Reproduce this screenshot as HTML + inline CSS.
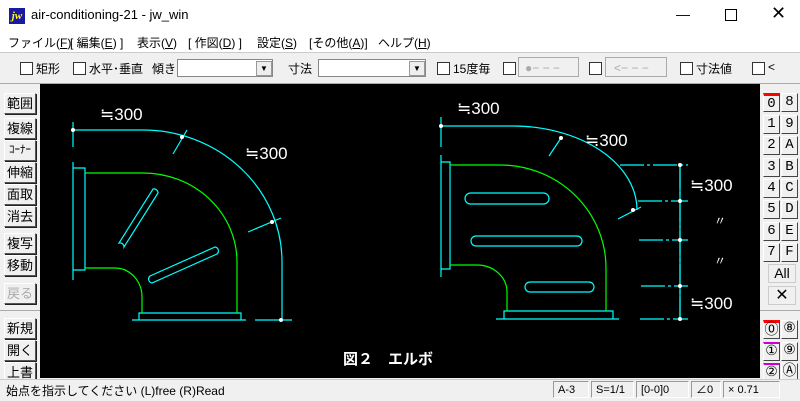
<!DOCTYPE html><html><head><meta charset="utf-8"><style>
body{margin:0;width:800px;height:400px;overflow:hidden;background:#f0f0f0;font-family:"Liberation Sans","Noto Sans CJK JP",sans-serif;position:relative}
.a{position:absolute;white-space:nowrap}
.t{font-size:12px;color:#000}
.cb{position:absolute;width:11px;height:11px;border:1px solid #333;background:#fff}
.btn{position:absolute;width:30px;height:19px;background:#f0f0f0;border:1px solid;border-color:#fff #555 #555 #fff;box-shadow:1px 1px 0 #222;font-size:13px;text-align:center;line-height:19px}
.rb{position:absolute;width:15px;height:17px;background:#f0f0f0;border:1px solid;border-color:#fff #444 #444 #fff;font-family:"Liberation Mono",monospace;font-size:14px;text-align:center;line-height:17px}
.sb{position:absolute;top:381px;height:17px;border:1px solid;border-color:#999 #fff #fff #999;font-size:11px;line-height:17px;padding-left:4px;box-sizing:border-box}
</style></head><body>
<div class="a" style="left:0;top:0;width:800px;height:32px;background:#fff"></div>
<div class="a" style="left:9px;top:8px;width:16px;height:16px;background:#1a1aa0;color:#ff0;font:bold italic 11px 'Liberation Serif',serif;line-height:16px;text-align:center">jw</div>
<div class="a" style="left:31px;top:7px;font-size:13px">air-conditioning-21 - jw_win</div>
<div class="a" style="left:676px;top:6px;font-size:14px">&#8212;</div>
<div class="a" style="left:725px;top:9px;width:10px;height:10px;border:1px solid #000"></div>
<div class="a" style="left:771px;top:3px;font-size:18px">✕</div>
<div class="a" style="left:0;top:32px;width:800px;height:20px;background:#fff"></div>
<div class="a t" style="left:8px;top:34px">ファイル(<u>F</u>)</div>
<div class="a t" style="left:70px;top:34px">[ 編集(<u>E</u>) ]</div>
<div class="a t" style="left:137px;top:34px">表示(<u>V</u>)</div>
<div class="a t" style="left:188px;top:34px">[ 作図(<u>D</u>) ]</div>
<div class="a t" style="left:257px;top:34px">設定(<u>S</u>)</div>
<div class="a t" style="left:309px;top:34px">[その他(<u>A</u>)]</div>
<div class="a t" style="left:378px;top:34px">ヘルプ(<u>H</u>)</div>
<div class="a" style="left:0;top:52px;width:800px;height:1px;background:#ccc"></div>
<div class="cb" style="left:20px;top:62px"></div><div class="a t" style="left:36px;top:60px">矩形</div>
<div class="cb" style="left:73px;top:62px"></div><div class="a t" style="left:89px;top:60px">水平･垂直</div>
<div class="a t" style="left:152px;top:60px">傾き</div>
<div class="a" style="left:177px;top:59px;width:94px;height:16px;background:#fff;border:1px solid #888"></div>
<div class="a" style="left:256px;top:61px;width:14px;height:13px;border:1px solid #999;background:#eee;font-size:8px;text-align:center;line-height:13px">▼</div>
<div class="a t" style="left:288px;top:60px">寸法</div>
<div class="a" style="left:318px;top:59px;width:106px;height:16px;background:#fff;border:1px solid #888"></div>
<div class="a" style="left:409px;top:61px;width:14px;height:13px;border:1px solid #999;background:#eee;font-size:8px;text-align:center;line-height:13px">▼</div>
<div class="cb" style="left:437px;top:62px"></div><div class="a t" style="left:453px;top:60px">15度毎</div>
<div class="cb" style="left:503px;top:62px"></div>
<div class="a" style="left:518px;top:57px;width:61px;height:20px;border:1px solid #aaa;color:#aaa;font-size:12px;line-height:20px;padding-left:6px;box-sizing:border-box">●− − −</div>
<div class="cb" style="left:589px;top:62px"></div>
<div class="a" style="left:605px;top:57px;width:62px;height:20px;border:1px solid #aaa;color:#aaa;font-size:12px;line-height:20px;padding-left:8px;box-sizing:border-box">&lt;− − −</div>
<div class="cb" style="left:680px;top:62px"></div><div class="a t" style="left:696px;top:60px">寸法値</div>
<div class="cb" style="left:752px;top:62px"></div><div class="a t" style="left:768px;top:60px">&lt;</div>
<div class="a" style="left:0;top:83px;width:800px;height:1px;background:#aaa"></div>
<div class="a" style="left:40px;top:84px;width:720px;height:294px;background:#000"></div>
<div class="btn" style="left:4px;top:93px">範囲</div>
<div class="btn" style="left:4px;top:118px">複線</div>
<div class="btn" style="left:4px;top:140px;font-size:11px">ｺｰﾅｰ</div>
<div class="btn" style="left:4px;top:162px">伸縮</div>
<div class="btn" style="left:4px;top:184px">面取</div>
<div class="btn" style="left:4px;top:206px">消去</div>
<div class="btn" style="left:4px;top:233px">複写</div>
<div class="btn" style="left:4px;top:255px">移動</div>
<div class="btn" style="left:4px;top:283px;color:#aaa">戻る</div>
<div class="a" style="left:0;top:310px;width:40px;height:1px;background:#aaa"></div>
<div class="btn" style="left:4px;top:318px">新規</div>
<div class="btn" style="left:4px;top:340px">開く</div>
<div class="btn" style="left:4px;top:362px">上書</div>
<div class="rb" style="left:763px;top:93px;border-top:3px solid red;height:15px">0</div><div class="rb" style="left:781px;top:93px">8</div>
<div class="rb" style="left:763px;top:115px">1</div><div class="rb" style="left:781px;top:115px">9</div>
<div class="rb" style="left:763px;top:136px">2</div><div class="rb" style="left:781px;top:136px">A</div>
<div class="rb" style="left:763px;top:158px">3</div><div class="rb" style="left:781px;top:158px">B</div>
<div class="rb" style="left:763px;top:179px">4</div><div class="rb" style="left:781px;top:179px">C</div>
<div class="rb" style="left:763px;top:200px">5</div><div class="rb" style="left:781px;top:200px">D</div>
<div class="rb" style="left:763px;top:222px">6</div><div class="rb" style="left:781px;top:222px">E</div>
<div class="rb" style="left:763px;top:243px">7</div><div class="rb" style="left:781px;top:243px">F</div>
<div class="a" style="left:768px;top:264px;width:26px;height:17px;font-size:14px;text-align:center;border:1px solid #ccc">All</div>
<div class="a" style="left:768px;top:286px;width:26px;height:17px;font-size:16px;text-align:center;line-height:17px;border:1px solid #ccc">✕</div>
<div class="a" style="left:760px;top:310px;width:40px;height:1px;background:#aaa"></div>
<div class="rb" style="left:763px;top:320px;color:#000;border-top:3px solid red;height:15px">⓪</div><div class="rb" style="left:781px;top:320px">⑧</div>
<div class="rb" style="left:763px;top:342px;border-top:2px solid #c0c;height:16px">①</div><div class="rb" style="left:781px;top:342px">⑨</div>
<div class="rb" style="left:763px;top:363px;border-top:2px solid #c0c;height:14px">②</div><div class="rb" style="left:781px;top:363px">Ⓐ</div>
<div class="a" style="left:0;top:379px;width:800px;height:21px;background:#f0f0f0;border-top:1px solid #ccc"></div>
<div class="a t" style="left:6px;top:382px">始点を指示してください (L)free (R)Read</div>
<div class="sb" style="left:553px;width:36px">A-3</div>
<div class="sb" style="left:591px;width:43px">S=1/1</div>
<div class="sb" style="left:636px;width:53px">[0-0]0</div>
<div class="sb" style="left:691px;width:30px">∠0</div>
<div class="sb" style="left:723px;width:57px">× 0.71</div>
<svg class="a" style="left:0;top:0" width="800" height="400" fill="none" stroke-width="1.2">
<g stroke="#0ff">
<path d="M73 122V147M73 162V280M73 130H143A139 132 0 0 1 282 262V320M73 168H85V270H73"/>
<path d="M132 320H246M139 320V313H241V320M255 320H292M173 154L187 130M248 232L281 218"/>
<path d="M158 193L124 247A4 4 0 0 0 119 243L153 189A4 4 0 0 1 158 193Z"/>
<path d="M217 254L152 283A4 4 0 0 1 150 276L215 247A4 4 0 0 1 217 254Z"/>
<path d="M441 117V147M441 155V277M441 126H513A124 84 0 0 1 637 210M441 162H450V269H441"/>
<path d="M496 319H619M504 319V311H613V319M549 156L561 138M618 219L641 207"/>
<rect x="465" y="193" width="84" height="11" rx="5.5"/><rect x="471" y="236" width="111" height="10" rx="5"/><rect x="525" y="282" width="69" height="10" rx="5"/>
<path d="M680 165V319M620 165H688M638 201H688M639 240H688M641 286H688M640 319H688" stroke-dasharray="24 3 3 3"/>
<path d="M680 165V319"/>
</g>
<g stroke="#0f0">
<path d="M85 173H143A94 89 0 0 1 237 262V313M85 268H115A27 29 0 0 1 142 297V313"/>
<path d="M450 165H500A106 103 0 0 1 606 268V311M450 265H477A30 27 0 0 1 507 292V311"/>
</g>
<g fill="#fff"><circle cx="73" cy="130" r="2"/><circle cx="182" cy="137" r="2"/><circle cx="272" cy="222" r="2"/><circle cx="281" cy="320" r="2"/><circle cx="441" cy="126" r="2"/><circle cx="561" cy="138" r="2"/><circle cx="633" cy="210" r="2"/><circle cx="680" cy="165" r="2"/><circle cx="680" cy="201" r="2"/><circle cx="680" cy="240" r="2"/><circle cx="680" cy="286" r="2"/><circle cx="680" cy="319" r="2"/></g>
<g fill="#fff" font-size="17" font-family="Liberation Sans Narrow,Liberation Sans,sans-serif">
<text x="100" y="120">≒300</text><text x="245" y="159">≒300</text><text x="457" y="114">≒300</text><text x="585" y="146">≒300</text><text x="690" y="191">≒300</text><text x="690" y="309">≒300</text>
<text x="714" y="225" font-size="12">〃</text><text x="714" y="265" font-size="12">〃</text>
<text x="343" y="364" font-size="15" font-weight="bold" font-family="Liberation Sans,Noto Sans CJK JP,sans-serif">図２　エルボ</text>
</g>
</svg>
</body></html>
